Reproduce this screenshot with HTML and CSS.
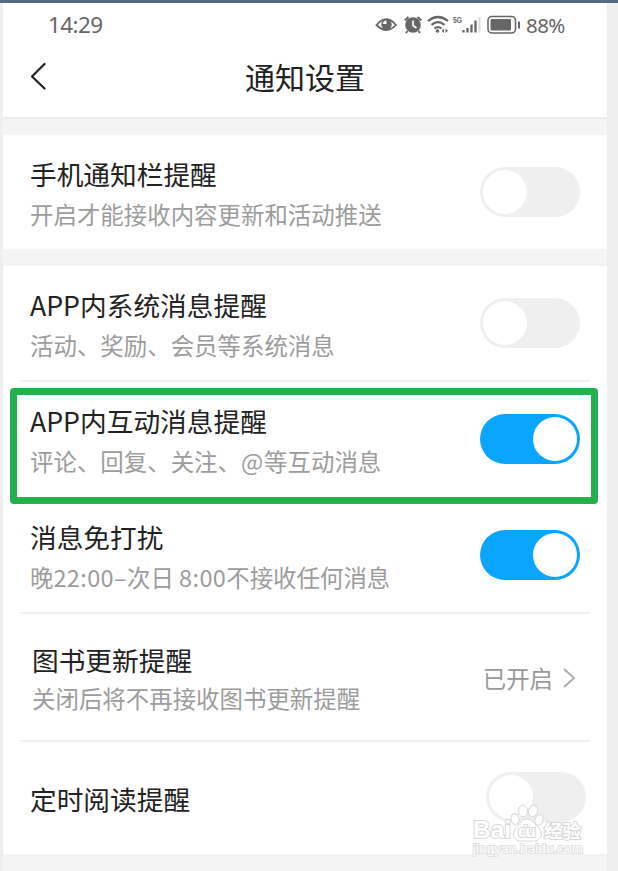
FILE: index.html
```html
<!DOCTYPE html>
<html lang="zh-CN">
<head>
  <meta charset="UTF-8">
  <meta name="viewport" content="width=device-width, initial-scale=1.0">
  <title>通知设置</title>
  <link rel="stylesheet" href="styles.css">
</head>
<body>
  <div class="phone">
    <header>
      <div class="status">
        <span class="time">14:29</span>
        <svg class="status-icons" width="146" height="22" viewBox="0 0 146 22" fill="none" stroke="#666">
          <!-- eye -->
          <path d="M1.500 11Q11.500 -0.500 21 11Q11.500 21 1.500 11Z" stroke-width="1.800"/>
          <circle cx="11.500" cy="10.500" r="5.200" fill="#666" stroke="none"/>
          <path d="M11.500 10V6.500A3.500 3.500 0 0 0 8 10Z" fill="#fff" stroke="none"/>
          <!-- alarm -->
          <circle cx="38" cy="11" r="7.800" fill="#666" stroke="none"/>
          <path d="M29.800 6.500L33.500 3M46.200 6.500L42.500 3M32.500 17L31 19M43.500 17L45 19" stroke-width="2"/>
          <path d="M38 6.500V11.500L41.500 14" stroke="#fff" stroke-width="1.600"/>
          <!-- wifi -->
          <path d="M53 7Q63 -1 73 7M56.500 10.800Q63 5.500 69.500 10.800M59.500 14.500Q63 11.800 66.500 14.500" stroke-width="2.200"/>
          <circle cx="62.500" cy="17" r="1.800" fill="#666" stroke="none"/>
          <path d="M69 14.500L66.500 16.800L69 19ZM70.500 14.500L73 16.800L70.500 19Z" fill="#666" stroke="none"/>
          <!-- signal -->
          <text class="net" x="78" y="9" textLength="9" lengthAdjust="spacingAndGlyphs">5G</text>
          <path d="M88.500 16V18.500M92.500 14V18.500M96.500 10.500V18.500M100.500 6.500V18.500" stroke-width="2.300"/>
          <path d="M104.500 3V18.500" stroke="#ddd" stroke-width="2"/>
          <!-- battery -->
          <rect x="113" y="2.500" width="27.500" height="16.500" rx="4" stroke-width="1.600"/>
          <rect x="115.500" y="5" width="20.500" height="11.500" rx="1" fill="#666" stroke="none"/>
          <path d="M144 7.500V14.500" stroke-width="2"/>
        </svg>
        <span class="percent">88%</span>
      </div>
      <div class="titlebar">
        <svg class="back" width="18" height="28" viewBox="0 0 18 28" fill="none" stroke="#222" stroke-width="2.200" stroke-linecap="round" stroke-linejoin="round">
          <path d="M15.500 2L3 14.500L15.500 26.500"/>
        </svg>
        <h1>通知设置</h1>
      </div>
    </header>

    <main>
      <section class="group">
        <div class="row">
          <div class="text">
            <h2>手机通知栏提醒</h2>
            <p>开启才能接收内容更新和活动推送</p>
          </div>
          <div class="toggle"></div>
        </div>
      </section>

      <section class="group">
        <div class="row">
          <div class="text">
            <h2>APP内系统消息提醒</h2>
            <p>活动、奖励、会员等系统消息</p>
          </div>
          <div class="toggle"></div>
        </div>
        <div class="row marked">
          <div class="text">
            <h2>APP内互动消息提醒</h2>
            <p>评论、回复、关注、<span class="at">@</span>等互动消息</p>
          </div>
          <div class="toggle on"></div>
        </div>
        <div class="row">
          <div class="text">
            <h2>消息免打扰</h2>
            <p>晚<span class="hours">22:00–</span>次日 <span class="hours">8:00</span>不接收任何消息</p>
          </div>
          <div class="toggle on"></div>
        </div>
        <div class="row link-row">
          <div class="text">
            <h2>图书更新提醒</h2>
            <p>关闭后将不再接收图书更新提醒</p>
          </div>
          <div class="state">
            <span>已开启</span>
            <svg width="14" height="22" viewBox="0 0 14 22" fill="none" stroke="#aaa" stroke-width="1.800"><path d="M2 2L12 11L2 20"/></svg>
          </div>
        </div>
        <div class="row timer-row">
          <div class="text">
            <h2>定时阅读提醒</h2>
          </div>
          <div class="toggle"></div>
        </div>
      </section>
    </main>

    <svg class="watermark" width="118" height="62" viewBox="0 0 118 62">
      <text class="wm-big" x="3" y="36" textLength="38" lengthAdjust="spacingAndGlyphs">Bai</text>
      <g class="paw">
        <ellipse cx="45" cy="17" rx="4" ry="5.500" transform="rotate(-15 45 17)"/>
        <ellipse cx="53" cy="9" rx="4.500" ry="6"/>
        <ellipse cx="63" cy="9" rx="4.500" ry="6" transform="rotate(18 63 9)"/>
        <ellipse cx="69" cy="18" rx="4" ry="5.500" transform="rotate(20 69 18)"/>
        <path d="M57 17C51 17 50 22 46 26C42 31 43 38 49 39C53 39 61 39 65 39C72 38 73 31 69 26C64 22 63 17 57 17Z"/>
      </g>
      <text class="wm-du" x="48" y="35" textLength="18">du</text>
      <text class="wm-cn" x="74" y="36">经验</text>
      <text class="wm-url" x="3" y="51" textLength="110">jingyan.baidu.com</text>
    </svg>
  </div>
</body>
</html>
```
FILE: styles.css
```css
*, *::before, *::after { box-sizing:border-box; }
body { margin:0; height:871px; overflow:hidden; background:#efefef; border-top:3px solid #546b84; font-family:"Noto Sans CJK SC", sans-serif; color:#222; }
h1, h2, p { margin:0; font-weight:400; white-space:nowrap; }
.phone { position:relative; width:604px; height:868px; margin-left:3px; background:#f4f4f4; }

header { height:116px; background:#fff; border-bottom:2px solid #ececec; }
.status { display:flex; align-items:center; height:43px; padding:0 42px 0 45px; color:#666; font-family:"Noto Sans", sans-serif; }
.time { flex:1; font-size:22.5px; letter-spacing:-0.6px; }
.status-icons { margin-right:5px; }
.net { font:bold 9px "Liberation Sans", sans-serif; fill:#666; stroke:none; }
.percent { width:39px; font-size:20.5px; letter-spacing:-0.6px; }
.titlebar { display:grid; grid-template-columns:60px 1fr 60px; align-items:center; height:60px; }
.back { margin-left:26px; }
h1 { font-size:30px; line-height:40px; text-align:center; }

.group { margin-top:16px; background:#fff; }
.group + .group { margin-top:17px; }
.row { display:flex; justify-content:space-between; position:relative; height:116px; padding:19px 27px 0; }
.row:not(:last-child):not(.marked)::after { content:''; position:absolute; left:17px; right:17px; bottom:0; height:2px; background:#f0f0f0; }
.row:only-child { height:114px; }
h2 { font-size:26.7px; line-height:39px; }
p { font-size:23.45px; line-height:43px; color:#9c9c9c; }
.text { flex:1; }
.at { letter-spacing:1px; }
.hours { letter-spacing:0.4px; }
.toggle { width:100px; height:50px; margin-top:13px; padding:3px; border-radius:25px; background:#efefef; }
.toggle::before { content:''; display:block; width:44px; height:44px; border-radius:50%; background:#fff; }
.toggle.on { background:#0aa5ff; }
.toggle.on::before { margin-left:auto; }

/* green frame drawn over the highlighted row */
.marked::before { content:''; position:absolute; z-index:1; left:7px; top:6px; width:588px; height:116px; border:7px solid #24b04b; border-radius:4px; }

.link-row { height:128px; padding:26px 31px 0 29px; }
.link-row p { line-height:39px; }
.state { display:flex; align-items:center; gap:9px; height:75px; color:#999; font-size:23.4px; }
.timer-row { height:112px; padding:37px 21px 0 27px; }
.timer-row .toggle { margin-top:-7px; }

.watermark { position:absolute; left:467px; top:799px; }
.paw, .watermark text { fill:#fff; stroke:#d8d8d8; stroke-width:1; }
.watermark text { paint-order:stroke; stroke-width:2; font-family:"Liberation Sans", sans-serif; }
.watermark .wm-big { font-size:24px; font-weight:bold; }
.watermark .wm-du { font-size:17px; font-weight:bold; }
.watermark .wm-cn { font-family:"Noto Sans CJK SC", sans-serif; font-size:18.5px; font-weight:bold; }
.watermark .wm-url { font-size:13.5px; stroke:#e0e0e0; }
```
